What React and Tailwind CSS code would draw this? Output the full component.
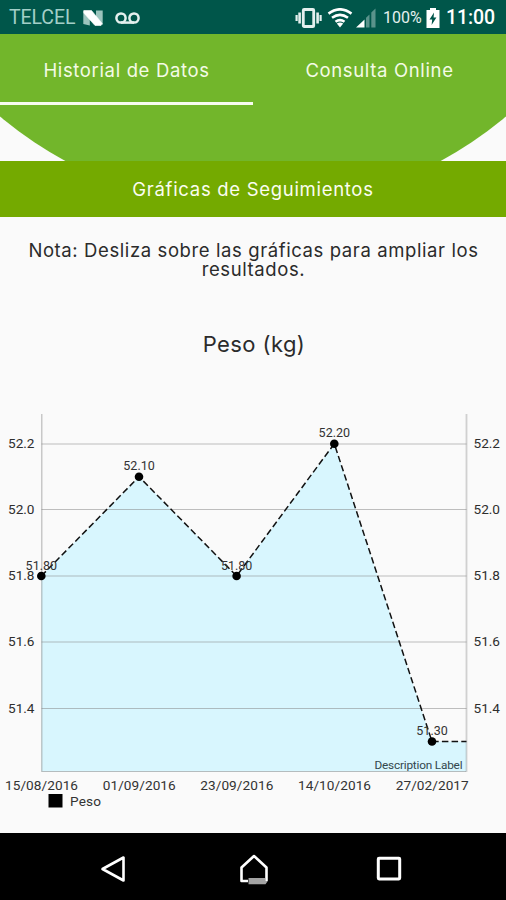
import React, { useState } from "react";

const points = [
  { date: "15/08/2016", label: "51.80", x: 41.3, y: 576 },
  { date: "01/09/2016", label: "52.10", x: 139, y: 476.7 },
  { date: "23/09/2016", label: "51.80", x: 236.6, y: 576 },
  { date: "14/10/2016", label: "52.20", x: 334.3, y: 443.7 },
  { date: "27/02/2017", label: "51.30", x: 432, y: 741.5 },
];

const ticks = [
  { value: "52.2", y: 444 },
  { value: "52.0", y: 509.5 },
  { value: "51.8", y: 576 },
  { value: "51.6", y: 642 },
  { value: "51.4", y: 708.5 },
];

function StatusBar() {
  return (
    <div className="flex h-[34px] shrink-0 items-center bg-[#00564a] pt-[2px] font-['Roboto',sans-serif] text-white">
      <span className="ml-[9px] w-[68px] whitespace-nowrap text-[19.5px] tracking-[-0.1px] text-[#a3cfc8]">TELCEL</span>
      <svg className="ml-[6px] h-[16px] w-[20px]" viewBox="0 0 20 16">
        <path d="M0.3 0.5V14L6.8 15.5V6z" fill="#9cc4bd" />
        <path d="M13 0.5H19.7V15L13 10z" fill="#9cc4bd" />
        <path d="M0.8 0.5H8.5L19.2 13.5L18 15.5H12L0.8 3z" fill="#fff" stroke="#fff" strokeWidth="0.6" />
      </svg>
      <svg className="ml-[12px] h-[14px] w-[25px]" viewBox="0 0 25 14" fill="none" stroke="#e4f0ee" strokeWidth="2.5">
        <circle cx="6" cy="7" r="4.6" />
        <circle cx="19" cy="7" r="4.6" />
        <path d="M6 11.6H19" />
      </svg>
      <svg className="ml-[155px] h-[20px] w-[28px]" viewBox="0 0 28 20" fill="none" stroke="#e4f0ee">
        <rect x="8.3" y="1.5" width="10.4" height="17" rx="0.8" strokeWidth="2.8" />
        <path d="M4.6 4.5V15.5M22.6 4.5V15.5" strokeWidth="2.6" />
        <path d="M1.6 7V13M25.6 7V13" strokeWidth="2.2" />
      </svg>
      <svg className="ml-[4px] h-[20px] w-[26px]" viewBox="0 0 26 20" fill="none" stroke="#fff" strokeWidth="2.6">
        <path d="M1.5 5.6Q13 -3 24.5 5.6" />
        <path d="M5 9.8Q13 3.8 21 9.8" />
        <path d="M8.5 13.8Q13 10.5 17.5 13.8" />
        <path d="M9.8 15.6Q13 13.6 16.2 15.6L13 19.5z" fill="#fff" stroke="none" />
      </svg>
      <svg className="ml-[3px] h-[20px] w-[20px]" viewBox="0 0 20 20">
        <path d="M0 19.5L8.5 11.5V19.5z" fill="#fff" />
        <path d="M10 19.5V9.8L13.5 6.5V19.5zM15.3 19.5V4.6L19.5 0.6V19.5z" fill="#5a938b" />
      </svg>
      <span className="ml-[7px] w-[39px] whitespace-nowrap text-[16px] text-[#e4f0ee]">100%</span>
      <svg className="ml-[4px] h-[20px] w-[14px]" viewBox="0 0 14 20">
        <path d="M4 0H10V2H13.5V20H0.5V2H4z" fill="#fff" />
        <path d="M8 4.5L3.5 11.5H6.2L5.6 17L10.4 9.6H7.6z" fill="#00564a" />
      </svg>
      <span className="ml-[6px] whitespace-nowrap text-[19.5px] font-medium tracking-[-0.1px]">11:00</span>
    </div>
  );
}

function Header() {
  const [tab, setTab] = useState(0);
  const tabs = ["Historial de Datos", "Consulta Online"];

  return (
    <div className="relative h-[127px] shrink-0 overflow-hidden">
      <svg className="absolute inset-0 h-full w-full" viewBox="0 34 506 127">
        <circle cx="253" cy="-185" r="393.6" fill="#72b62b" />
      </svg>
      <div className="relative flex h-[70.5px]">
        {tabs.map((name, i) => (
          <button
            key={name}
            onClick={() => setTab(i)}
            className={`flex w-1/2 justify-center border-b-[3px] pt-[22px] text-[18.5px] leading-[28px] tracking-[0.65px] text-[#f4fbe6] ${tab === i ? "border-[#f7fbf0]" : "border-transparent"}`}
          >
            {name}
          </button>
        ))}
      </div>
    </div>
  );
}

function WeightChart() {
  const line = points.map((p) => `${p.x},${p.y}`).join(" ") + " 466.5,741.5";

  return (
    <svg className="block h-[433px] w-full font-['Roboto',sans-serif]" viewBox="0 400 506 433">
      <polygon points={`41.5,771.5 ${line} 466.5,771.5`} fill="#d8f6fe" />

      {ticks.map((t) => (
        <g key={t.value} fontSize="13.6" fill="#2e2e2e">
          <line x1="41.5" x2="466.5" y1={t.y} y2={t.y} stroke="#808080" strokeOpacity="0.5" strokeWidth="1.2" />
          <text x="8" y={t.y + 4.3} textLength="26.5">{t.value}</text>
          <text x="473.5" y={t.y + 4.3} textLength="26.5">{t.value}</text>
        </g>
      ))}

      <path d="M41.8 414V771.5H466" fill="none" stroke="#808080" strokeOpacity="0.5" strokeWidth="1.2" />
      <path d="M466.5 414V772" stroke="#808080" strokeOpacity="0.35" strokeWidth="1.8" />

      <polyline points={line} fill="none" stroke="#111" strokeWidth="1.5" strokeDasharray="6.5 3.2" />

      {points.map((p) => (
        <g key={p.date} fill="#333">
          <circle cx={p.x} cy={p.y} r="4.3" fill="#000" />
          <text x={p.x - 15.7} y={p.y - 6.5} fontSize="12.5" textLength="31.5">{p.label}</text>
          <text x={p.x - 36.3} y="790" fontSize="13.6" textLength="73">{p.date}</text>
        </g>
      ))}

      <text x="374.5" y="768.7" fontSize="11.8" fill="#33474d" textLength="88">Description Label</text>
      <rect x="48.5" y="794" width="14" height="13.5" fill="#000" />
      <text x="70" y="806.3" fontSize="13.6" fill="#333" textLength="31">Peso</text>
    </svg>
  );
}

function NavBar() {
  return (
    <div className="flex h-[67px] shrink-0 items-center bg-black pt-[4px]">
      <svg className="ml-[100px] h-[28px] w-[26px]" viewBox="0 0 26 28">
        <path d="M2.5 14L23.5 2.5V25.5z" fill="none" stroke="#fff" strokeWidth="2.6" strokeLinejoin="round" />
      </svg>
      <svg className="ml-[113px] h-[32px] w-[30px]" viewBox="0 0 30 32">
        <path d="M9 28H2.5V14.5L15 3L27.5 14.5V28" fill="none" stroke="#fff" strokeWidth="2.6" strokeLinejoin="round" />
        <path d="M9.5 25H26.2V28H28.8L26.5 31.3H9.5z" fill="#a3a3a3" />
      </svg>
      <svg className="ml-[107px] h-[25px] w-[26px]" viewBox="0 0 26 25">
        <rect x="2.3" y="2.3" width="21.4" height="20.6" rx="0.8" fill="none" stroke="#fff" strokeWidth="3" />
      </svg>
    </div>
  );
}

export default function App() {
  return (
    <main className="flex h-[900px] w-[506px] flex-col overflow-hidden bg-[#fafafa] font-['Inter',sans-serif] text-[#2b2b2b]">
      <StatusBar />
      <Header />
      <h1 className="h-[55.5px] shrink-0 bg-[#74aa00] pt-[14px] text-center text-[18.5px] leading-[28px] tracking-[0.7px] text-[#fbfdf0]">
        Gráficas de Seguimientos
      </h1>
      <div className="h-[183.5px] shrink-0 text-center">
        <p className="pl-px pt-[24px] text-[18.5px] leading-[19.5px] tracking-[0.6px]">
          Nota: Desliza sobre las gráficas para ampliar los
          <br />
          resultados.
        </p>
        <h2 className="pl-[2px] pt-[49px] text-[22px] leading-[30px] tracking-[0.4px]">Peso (kg)</h2>
      </div>
      <WeightChart />
      <NavBar />
    </main>
  );
}
